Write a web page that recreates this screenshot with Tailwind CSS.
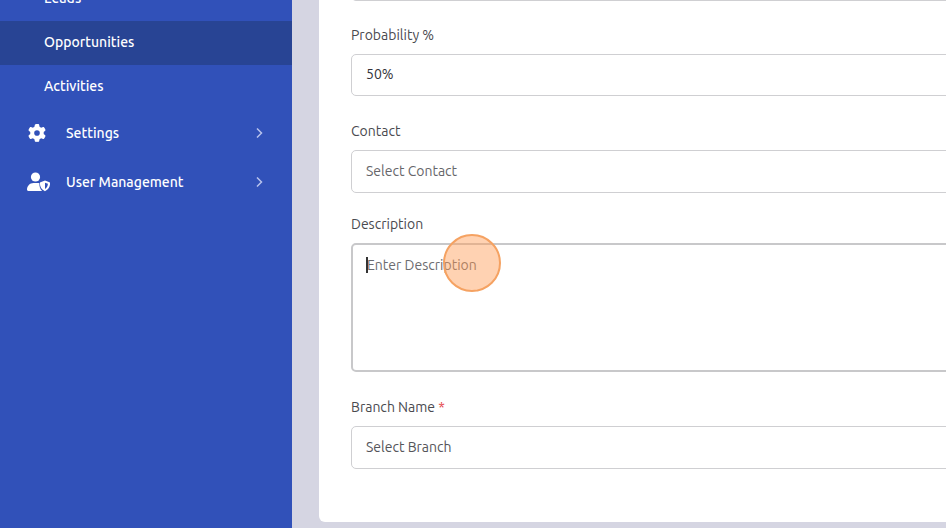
<!DOCTYPE html>
<html lang="en">
<head>
    <meta charset="UTF-8">
    <meta name="viewport" content="width=device-width, initial-scale=1.0">
    <title>Opportunities</title>
    <script src="https://cdn.jsdelivr.net/npm/@tailwindcss/browser@4"></script>
</head>
<body class="flex h-screen overflow-hidden bg-[#d5d5e2] font-['Ubuntu','Noto_Sans',sans-serif] text-sm text-[#4a4a4f]">
    <!-- Sidebar -->
    <nav class="w-[292px] shrink-0 overflow-hidden bg-[#3151b9] font-medium text-white" aria-label="Main">
        <ul class="-mt-[23px]">
            <li><a href="#" class="flex h-11 items-center pb-0.5 pl-11">Leads</a></li>
            <li><a href="#" class="flex h-11 items-center bg-[#284494] pb-0.5 pl-11" aria-current="page">Opportunities</a></li>
            <li><a href="#" class="flex h-11 items-center pb-0.5 pl-11">Activities</a></li>
        </ul>
        <button type="button" class="flex h-[49px] w-full items-center pr-7 pb-0.5 pl-7 text-left">
            <svg class="mr-5 h-[18px] w-[18px] shrink-0" viewBox="0 0 512 512" fill="currentColor" aria-hidden="true">
                <path d="M495.9 166.6c3.2 8.700.5 18.400-6.400 24.600l-43.300 39.400c1.100 8.300 1.700 16.800 1.700 25.400s-.6 17.100-1.700 25.400l43.300 39.400c6.900 6.200 9.600 15.900 6.400 24.600c-4.400 11.900-9.700 23.300-15.800 34.300l-4.700 8.100c-6.600 11-14 21.400-22.100 31.200c-5.900 7.200-15.700 9.600-24.500 6.800l-55.700-17.700c-13.400 10.300-28.200 18.900-44 25.400l-12.500 57.100c-2 9.100-9 16.300-18.200 17.800c-13.800 2.300-28 3.500-42.500 3.500s-28.700-1.200-42.500-3.500c-9.200-1.500-16.200-8.700-18.200-17.800l-12.500-57.100c-15.800-6.500-30.600-15.100-44-25.400L83.100 425.900c-8.800 2.800-18.600.3-24.500-6.800c-8.100-9.800-15.500-20.200-22.100-31.200l-4.700-8.100c-6.100-11-11.400-22.400-15.800-34.300c-3.200-8.700-.5-18.400 6.400-24.600l43.300-39.400C64.600 273.100 64 264.600 64 256s.6-17.100 1.700-25.400L22.400 191.200c-6.900-6.200-9.600-15.900-6.400-24.600c4.400-11.900 9.700-23.300 15.800-34.300l4.700-8.100c6.600-11 14-21.400 22.100-31.200c5.900-7.200 15.700-9.600 24.500-6.800l55.700 17.700c13.400-10.300 28.200-18.900 44-25.400l12.500-57.100c2-9.100 9-16.300 18.200-17.800C227.300 1.200 241.500 0 256 0s28.700 1.200 42.500 3.500c9.200 1.500 16.200 8.700 18.200 17.800l12.500 57.100c15.800 6.500 30.600 15.100 44 25.400l55.700-17.700c8.800-2.800 18.600-.3 24.500 6.800c8.100 9.800 15.500 20.200 22.100 31.200l4.700 8.100c6.100 11 11.400 22.400 15.800 34.300zM256 336a80 80 0 1 0 0-160 80 80 0 1 0 0 160z"/>
            </svg>
            Settings
            <svg class="ml-auto h-2.5 w-2.5" viewBox="0 0 10 10" fill="none" stroke="#b8c3ed" stroke-width="1.5" aria-hidden="true"><path d="M3 .5 7.500 5 3 9.500"/></svg>
        </button>
        <button type="button" class="flex h-[49px] w-full items-center pr-7 pb-0.5 pl-[27px] text-left">
            <svg class="mr-4 h-5 w-[23px] shrink-0" viewBox="0 0 23 20" fill="currentColor" aria-hidden="true">
                <circle cx="8.500" cy="5" r="4.600"/>
                <path d="M6.500 11h4c.7 0 1.300.1 1.900.3-.2 3 .7 5.900 2.700 7.700H1.300c-.7 0-1.300-.5-1.300-1.200C0 13.900 2.900 11 6.500 11z"/>
                <path fill-rule="evenodd" d="M18 8.500l4.500 1.700c.4.100.6.500.6.900 0 3.200-1.300 6.500-4.800 8a1 1 0 0 1-.7 0c-3.400-1.500-4.700-4.800-4.700-8 0-.4.200-.8.600-.9zM18 10.700v6.400c1.900-1.100 2.700-3 2.900-5.300z"/>
            </svg>
            User Management
            <svg class="ml-auto h-2.5 w-2.5" viewBox="0 0 10 10" fill="none" stroke="#b8c3ed" stroke-width="1.5" aria-hidden="true"><path d="M3 .5 7.500 5 3 9.500"/></svg>
        </button>
    </nav>

    <!-- Form card, wider than the window -->
    <main class="-mr-10 min-w-0 flex-1 pl-[27px]">
        <form class="-mt-[42px] rounded-md bg-white px-8 pb-[53px]">
            <input type="text" aria-label="Amount" class="block h-[43px] w-full rounded-[5px] border border-[#cfcfd2] px-3.5">

            <div class="mt-[23px]">
                <label for="probability" class="mb-2 block leading-[22px]">Probability %</label>
                <input id="probability" type="text" value="50%" class="block h-[42px] w-full rounded-[5px] border border-[#cfcfd2] px-3.5 pb-0.5 text-[#333338]">
            </div>

            <div class="mt-6">
                <label for="contact" class="mb-2 block leading-[22px]">Contact</label>
                <select id="contact" class="block h-[43px] w-full appearance-none rounded-[5px] border border-[#cfcfd2] px-3.5 pb-0.5 text-[#66666a]">
                    <option>Select Contact</option>
                </select>
            </div>

            <div class="relative mt-5">
                <label for="description" class="mb-2 block leading-[22px]">Description</label>
                <textarea id="description" placeholder="Enter Description" class="block h-[129px] w-full resize-none rounded-[5px] border-2 border-[#c8c8ca] px-3.5 py-2.5 placeholder:text-[#6c6c70]"></textarea>
                <!-- text cursor and click marker -->
                <span class="absolute top-11 left-[15px] h-4 w-0.5 bg-[#333]"></span>
                <span class="absolute top-[21px] left-[92px] size-[58px] rounded-full border-2 border-[#f5a262] bg-[#ff9c54]/45"></span>
            </div>

            <div class="mt-6">
                <label for="branch" class="mb-2 block leading-[22px]">Branch Name <span class="text-[#e5484d]">*</span></label>
                <select id="branch" class="block h-[43px] w-full appearance-none rounded-[5px] border border-[#cfcfd2] px-3.5 pb-0.5 text-[#55555a]">
                    <option>Select Branch</option>
                </select>
            </div>
        </form>
    </main>
</body>
</html>
